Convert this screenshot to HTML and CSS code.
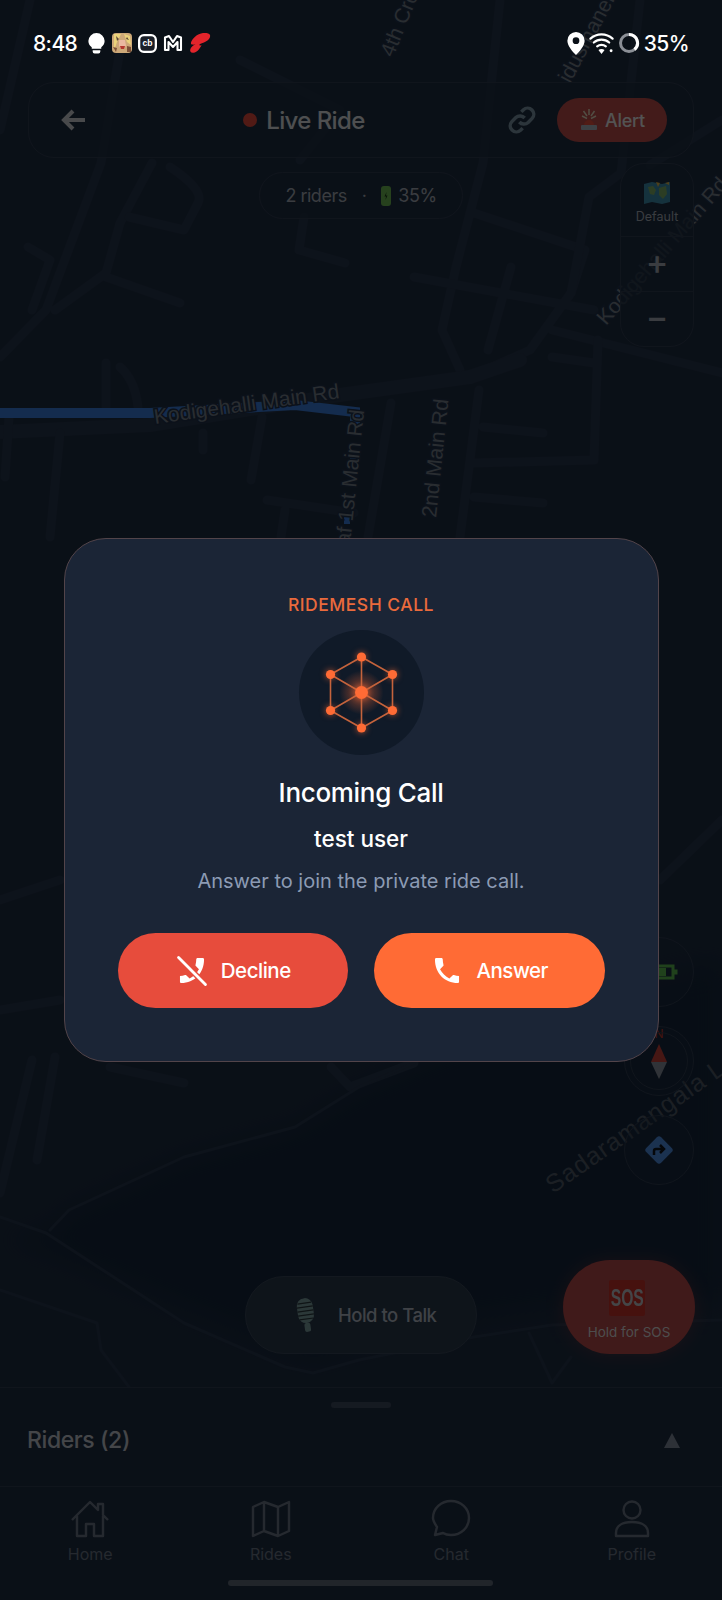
FILE: index.html
```html
<!DOCTYPE html>
<html lang="en">
<head>
    <meta charset="UTF-8">
    <meta name="viewport" content="width=device-width, initial-scale=1.0">
    <title>Live Ride</title>
    <link rel="stylesheet" href="styles.css">
</head>
<body>
    <div class="phone">
        <div class="map-area">
            <svg class="map" viewBox="0 0 722 1387" width="722" height="1387">
                <path class="lake" d="M0 1240 L50 1230 L69 1210 L184 1157 L295 1127 L359 1087 L414 1063 L560 1000 L722 960 V1300 L552 1310 L474 1320 L359 1345 L313 1360 L285 1350 L184 1310 L46 1250 Z"/>
                <g class="roads">
                    <path d="M30 0 L0 130 M120 50 L101 163 L46 310 L0 357 M152 163 L120 223 L106 273 L55 310 M106 277 L180 303"/>
                    <path d="M28 247 L50 260 L32 310 M170 167 Q205 190 198 203 L184 230 L129 217 M304 217 L299 250 L345 263"/>
                    <path d="M240 60 L340 110 L300 160 M500 0 L483 163 L456 267 L442 330 L460 370 M474 213 L585 250 L571 293"/>
                    <path d="M640 0 L621 173 L589 197 L571 293 L530 350 L470 377 M414 277 L594 310 M511 267 L488 350 M552 330 L722 373 M722 120 L650 165"/>
                    <path class="wide" d="M0 432 L150 425 L340 395 L470 377 L520 360"/>
                    <path d="M391 403 L368 537 M479 390 L460 537 M598 340 L594 460 L474 463 M552 357 L594 363 M483 427 L543 433 M474 497 L543 503"/>
                    <path d="M60 433 L50 537 M9 417 L5 477 M106 363 V407 M120 367 Q135 380 138 407 M203 433 V450 M262 417 L251 480 M267 500 L354 513 M285 510 L281 537"/>
                    <path d="M0 900 L60 880 M0 1010 L60 1000 M722 820 L660 880 M55 1057 L37 1160 M32 1060 L0 1193 M110 1067 L184 1083 M331 1067 L350 1087 L414 1063"/>
                    <path class="thin" d="M50 1230 L69 1210 L184 1157 L295 1127 L359 1087 L414 1063"/>
                    <path class="thin" d="M0 1217 L46 1233 L184 1323 L285 1367 L313 1373 L359 1360 L474 1337 L552 1325 L722 1320"/>
                    <path class="thin" d="M0 1290 L97 1323 L101 1350 L129 1387 M529 1333 L552 1383 L571 1357"/>
                </g>
                <path class="route" d="M0 413 H150 L295 405 L355 412 V424"/>
                <path class="route small" d="M353 457 V462 M347 516 V524"/>
                <text class="road-label" transform="translate(155 424) rotate(-8)">Kodigehalli Main Rd</text>
                <text class="road-label" transform="translate(350 545) rotate(-84)">af 1st Main Rd</text>
                <text class="road-label" transform="translate(436 518) rotate(-84)">2nd Main Rd</text>
                <text class="road-label" transform="translate(393 58) rotate(-68)">4th Cross</text>
                <text class="road-label" transform="translate(570 84) rotate(-62)">idusmaneha</text>
                <text class="road-label" transform="translate(606 326) rotate(-49)">Kodigehalli Main Rd</text>
                <text class="road-label big" transform="translate(553 1194) rotate(-35)">Sadaramangala Lake</text>
            </svg>

            <div class="top-overlay">
                <div class="topbar">
                    <svg class="back" viewBox="0 0 26 22" width="26" height="22"><path d="M24 11H4M12 2 3 11l9 9"/></svg>
                    <div class="title"><span class="live-dot"></span>Live Ride</div>
                    <svg class="link-icon" viewBox="0 0 24 24" width="32" height="32"><path d="M10 13.5a4.6 4.6 0 0 0 6.6.3l3-3a4.6 4.6 0 0 0-6.5-6.5l-1.6 1.6M14 10.5a4.6 4.6 0 0 0-6.6-.3l-3 3a4.6 4.6 0 0 0 6.5 6.5l1.6-1.6"/></svg>
                    <div class="alert-btn">
                        <svg viewBox="0 0 20 22" width="20" height="22"><path class="siren-ray" d="M10 0v6M4.5 2 8 7M15.5 2 12 7M3 7l5 2.5M17 7l-5 2.5"/><path class="siren-dome" d="M5 16a5 5 0 0 1 10 0z"/><rect class="siren-base" x="2" y="16" width="16" height="5" rx="1"/></svg>
                        Alert
                    </div>
                </div>
                <div class="chip">
                    <span>2 riders</span>
                    <span class="chip-sep">·</span>
                    <svg viewBox="0 0 10 20" width="10" height="20"><rect width="10" height="20" rx="3" fill="#6dbb55"/><path d="M5.5 6 3.5 10.5H5L4.5 14l2-4.5H5z" fill="#1d3a18"/></svg>
                    <span>35%</span>
                </div>
            </div>

            <div class="map-controls">
                <div class="style-btn">
                    <svg viewBox="0 0 28 24" width="28" height="24">
                        <path d="M1 3 9 1l10 2 8-2v20l-8 2-10-2-8 2z" fill="#3e8fb0"/>
                        <path d="M5 6l5-1 3 4-2 5-4-1zM16 7l7-2 1 8-4 5-4-4z" fill="#7fb069"/>
                        <path d="M13 1l4 1-2 4zM22 2l4-1v3z" fill="#e0b84a"/>
                    </svg>
                    <span>Default</span>
                </div>
                <div class="zoom-btn">+</div>
                <div class="zoom-btn">−</div>
            </div>

            <div class="side-buttons">
                <div class="round-btn">
                    <svg class="battery" viewBox="0 0 24 16" width="24" height="16"><path d="M2 2h17v12H2zM22 5.5v5"/><rect class="battery-fill" x="4" y="4" width="8" height="8"/></svg>
                </div>
                <div class="round-btn compass">
                    <span class="compass-n">N</span>
                    <svg viewBox="0 0 16 35" width="16" height="35"><path d="M8 0 16 18H0z" fill="#c9433a"/><path d="M8 35 16 18H0z" fill="#8b93a0"/></svg>
                </div>
                <div class="round-btn">
                    <svg viewBox="0 0 32 32" width="32" height="32"><rect x="5.5" y="5.5" width="21" height="21" rx="3" transform="rotate(45 16 16)" fill="#4f8fe6"/><path d="M11 21v-4a2 2 0 0 1 2-2h7M17 11l4 4-4 4" fill="none" stroke="#10151d" stroke-width="2.5"/></svg>
                </div>
            </div>

            <div class="ptt-btn">
                <svg class="mic" viewBox="0 0 22 34" width="22" height="34">
                    <rect class="mic-head" x="3" y="0" width="16" height="25" rx="8"/>
                    <path class="mic-lines" d="M4 5h14M3 9h16M3 13h16M3 17h16M4 21h14"/>
                    <rect class="mic-stem" x="8" y="25" width="6" height="9" rx="2"/>
                </svg>
                <span>Hold to Talk</span>
            </div>
            <div class="sos-btn">
                <span class="sos-mark"><span class="sos-text">SOS</span></span>
                <span class="sos-label">Hold for SOS</span>
            </div>
        </div>

        <div class="sheet">
            <div class="handle"></div>
            <div class="sheet-row">
                <span>Riders (2)</span>
                <span class="sheet-arrow"></span>
            </div>
        </div>

        <nav class="tabs">
            <div class="tab">
                <svg viewBox="0 0 40 40" width="40" height="40"><path d="M2 21 20 3l8 8V5h5v11l5 5M7 17v20h9V25h8v12h9V17"/></svg>
                <span>Home</span>
            </div>
            <div class="tab">
                <svg viewBox="0 0 40 40" width="40" height="40"><path d="M2 8 13 3l14 5 11-5v29l-11 5-14-5-11 5zM13 3v29M27 8v29"/></svg>
                <span>Rides</span>
            </div>
            <div class="tab">
                <svg viewBox="0 0 40 40" width="40" height="40"><path d="M20 2c10 0 18 7.5 18 17s-8 17-18 17c-3 0-6-.7-8-2l-8 2 2-8c-2-3-4-6-4-9C2 9.5 10 2 20 2z"/></svg>
                <span>Chat</span>
            </div>
            <div class="tab">
                <svg viewBox="0 0 40 40" width="40" height="40"><circle cx="20" cy="11" r="8.5"/><path d="M4 37v-3c0-7 6-11 16-11s16 4 16 11v3z"/></svg>
                <span>Profile</span>
            </div>
            <div class="home-bar"></div>
        </nav>

        <div class="scrim">
            <div class="call-modal">
                <div class="call-tag">RIDEMESH CALL</div>
                <div class="call-logo">
                    <svg viewBox="0 0 125 125" width="125" height="125">
                        <defs>
                            <radialGradient id="glow">
                                <stop offset="0" stop-color="#ff6b35" stop-opacity=".55"/>
                                <stop offset="1" stop-color="#ff6b35" stop-opacity="0"/>
                            </radialGradient>
                        </defs>
                        <circle cx="62.5" cy="62.5" r="22" fill="url(#glow)"/>
                        <g class="mesh-lines">
                            <path d="M62.5 27 93.5 44.5V80.5L62.5 98 31.5 80.5V44.5Z"/>
                            <path d="M62.5 27V98M31.5 44.5 93.5 80.5M93.5 44.5 31.5 80.5"/>
                        </g>
                        <g class="mesh-nodes">
                            <circle cx="62.5" cy="27" r="4.6"/>
                            <circle cx="93.5" cy="44.5" r="4.6"/>
                            <circle cx="93.5" cy="80.5" r="4.6"/>
                            <circle cx="62.5" cy="98" r="4.6"/>
                            <circle cx="31.5" cy="80.5" r="4.6"/>
                            <circle cx="31.5" cy="44.5" r="4.6"/>
                            <circle cx="62.5" cy="62.5" r="6.5"/>
                        </g>
                    </svg>
                </div>
                <h2 class="call-title">Incoming Call</h2>
                <div class="call-user">test user</div>
                <p class="call-desc">Answer to join the private ride call.</p>
                <div class="call-actions">
                    <button class="call-btn decline">
                        <svg viewBox="0 0 24 24" width="34" height="34"><path fill="#fff" d="M20.5 15.5c-1.2 0-2.5-.2-3.6-.6-.3-.1-.7 0-1 .2l-2.2 2.2c-2.8-1.5-5.2-3.8-6.6-6.6l2.2-2.2c.3-.3.4-.7.2-1-.3-1.1-.5-2.4-.5-3.6 0-.6-.4-1-1-1H4.5c-.6 0-1 .4-1 1C3.5 13.6 10.4 20.5 19.5 20.5c.6 0 1-.4 1-1z" transform="matrix(-1 0 0 1 24 0)"/><path stroke="#e74c3c" stroke-width="4" d="M2.5 2.5 21.5 21.5"/><path stroke="#fff" stroke-width="2" stroke-linecap="round" d="M2.5 2.5 21.5 21.5"/></svg>
                        Decline
                    </button>
                    <button class="call-btn answer">
                        <svg viewBox="0 0 24 24" width="34" height="34"><path fill="#fff" d="M20.5 15.5c-1.2 0-2.5-.2-3.6-.6-.3-.1-.7 0-1 .2l-2.2 2.2c-2.8-1.5-5.2-3.8-6.6-6.6l2.2-2.2c.3-.3.4-.7.2-1-.3-1.1-.5-2.4-.5-3.6 0-.6-.4-1-1-1H4.5c-.6 0-1 .4-1 1C3.5 13.6 10.4 20.5 19.5 20.5c.6 0 1-.4 1-1z"/></svg>
                        Answer
                    </button>
                </div>
            </div>
        </div>

        <div class="statusbar">
            <div class="status-left">
                <span class="clock">8:48</span>
                <svg viewBox="0 0 18 22" width="19" height="21"><path fill="#fff" d="M9 0a8.5 8.5 0 0 1 8.5 8.5c0 3-1.7 5-3.5 6.5v1.5H4V15C2 13.5.5 11.5.5 8.5A8.5 8.5 0 0 1 9 0zM5 18h8v1.5a2 2 0 0 1-2 2H7a2 2 0 0 1-2-2z"/></svg>
                <svg viewBox="0 0 20 20" width="20" height="20">
                    <rect width="20" height="20" rx="4" fill="#cda878"/>
                    <path d="M2 1h7L5 9l-3 9zM12 1l6 2 1 9-4-3z" fill="#ead27a"/>
                    <path d="M7 7h6l1 6-4 3-3-3z" fill="#eab9a0"/>
                    <path d="M8 13h5l-1 3H9z" fill="#b5392f"/>
                    <path d="M1 14l4 1-1 4zM15 13l4 1v5h-4z" fill="#7c4f36"/>
                    <path d="M4 3l3 3-2 2zM15 4l2 3-3-1z" fill="#5b4636"/>
                </svg>
                <svg viewBox="0 0 20 20" width="19" height="19"><rect x="1.2" y="1.2" width="17.6" height="17.6" rx="5" fill="#1a1f28" stroke="#fff" stroke-width="2.4"/><text class="cb-mark" x="10" y="13">cb</text></svg>
                <svg viewBox="0 0 20 18" width="20" height="18"><path d="M2 16V3.5L6 2l4 6 4-6 4 1.5V16h-3.5V8L10 13 5.5 8v8z" fill="none" stroke="#fff" stroke-width="2.1" stroke-linejoin="round"/></svg>
                <svg viewBox="0 0 22 22" width="22" height="22"><path fill="#e3242b" d="M21 3c.8 3-2 6-6 7.5-2 .8-4 1-4.5 2-.4.8.6 1.2 2 .8-1.5 3-4 7-8 7.5-3 .4-4-2-3-4 1-2.5 3-3.5 5-4.5-2 .5-4 .5-4.500-.5C1.500 9 6 3 12 1.500c4-1 8-.5 9 1.500z"/></svg>
            </div>
            <div class="status-right">
                <svg viewBox="0 0 18 24" width="18" height="23"><path fill="#fff" fill-rule="evenodd" d="M9 0a9 9 0 0 1 9 9c0 5-5 11-9 15-4-4-9-10-9-15a9 9 0 0 1 9-9zm0 5.5a3.5 3.5 0 1 0 0 7 3.5 3.5 0 0 0 0-7z"/></svg>
                <svg viewBox="0 0 26 24" width="25" height="24"><g fill="none" stroke="#fff" stroke-width="2.3" stroke-linecap="round"><path d="M1.5 7.5c6.5-6 16.5-6 23 0"/><path d="M5 11.5c4.5-4 11.5-4 16 0"/><path d="M8.5 15.5c2.5-2 6.5-2 9 0"/></g><path fill="#fff" d="M13 23.5 9.8 19.3c2-1.400 4.400-1.400 6.400 0z"/><circle cx="23" cy="20" r="1.500" fill="#fff"/></svg>
                <svg viewBox="0 0 22 22" width="22" height="22"><circle cx="11" cy="11" r="8.5" fill="none" stroke="#8b8f96" stroke-width="3"/><path d="M11 2.5a8.5 8.5 0 0 1 5.5 15" fill="none" stroke="#fff" stroke-width="3"/></svg>
                <span class="clock">35%</span>
            </div>
        </div>
    </div>
</body>
</html>
```

FILE: styles.css
```css
* {
    box-sizing: border-box;
}
body {
    margin: 0;
    font-family: Inter, "Noto Sans", sans-serif;
    background-color: #0a0f18;
}
.phone {
    width: 722px;
    height: 1600px;
    position: relative;
    display: flex;
    flex-direction: column;
    overflow: hidden;
    background-color: #1f2f44;
    color: #fff;
}

/* map */
.map-area {
    height: 1387px;
    position: relative;
    padding-top: 82px;
    background-color: #1f2f44;
}
.map {
    position: absolute;
    top: 0;
    left: 0;
}
.lake {
    fill: #15273d;
    filter: blur(14px);
}
.roads path {
    fill: none;
    stroke: #27374d;
    stroke-width: 9;
    stroke-linecap: round;
    stroke-linejoin: round;
}
.roads path.wide {
    stroke-width: 14;
}
.roads path.thin {
    stroke-width: 3;
}
.route {
    fill: none;
    stroke: #3a7fe0;
    stroke-width: 10;
}
.route.small {
    stroke-width: 6;
}
.road-label {
    font-family: "Liberation Sans", sans-serif;
    font-size: 21px;
    fill: #76808c;
    stroke: #22324a;
    stroke-width: 3px;
    paint-order: stroke;
}
.road-label.big {
    font-size: 25px;
    letter-spacing: 1px;
    fill: #4f5a68;
    stroke: none;
}

/* top controls */
.top-overlay {
    position: relative;
    display: flex;
    flex-direction: column;
    align-items: center;
}
.topbar {
    width: 666px;
    height: 76px;
    display: flex;
    align-items: center;
    padding: 0 26px 0 32px;
    background-color: rgba(31, 47, 68, .8);
    border: 1px solid #2f3d52;
    border-radius: 26px;
}
.back {
    fill: none;
    stroke: #cdd1d6;
    stroke-width: 4;
}
.title {
    flex: 1;
    display: flex;
    justify-content: center;
    align-items: center;
    gap: 9px;
    padding-left: 15px;
    font-size: 24px;
    font-weight: 500;
    letter-spacing: -.6px;
    color: #dfe2e6;
}
.live-dot {
    width: 14px;
    height: 14px;
    border-radius: 50%;
    background-color: #e74c3c;
}
.link-icon {
    margin-right: 19px;
    fill: none;
    stroke: #7f98a8;
    stroke-width: 2.6;
}
.alert-btn {
    width: 110px;
    height: 44px;
    display: flex;
    align-items: center;
    justify-content: center;
    gap: 6px;
    background-color: #bf4d4b;
    border-radius: 22px;
    font-size: 18px;
    font-weight: 500;
    letter-spacing: -.3px;
    color: #eee;
}
.siren-ray {
    stroke: #e9dcc0;
    stroke-width: 1.5;
    fill: none;
}
.siren-dome {
    fill: #e9503f;
}
.siren-base {
    fill: #aeb7c2;
}
.chip {
    height: 47px;
    margin-top: 14px;
    padding: 0 25px;
    display: flex;
    align-items: center;
    gap: 10px;
    background-color: rgba(31, 47, 68, .8);
    border: 1px solid #2f3d52;
    border-radius: 24px;
    font-size: 18px;
    letter-spacing: -.5px;
    color: #a6adb8;
}
.chip-sep {
    margin: 0 5px;
}
.chip svg {
    margin-right: -3px;
}

.map-controls {
    position: absolute;
    top: 163px;
    right: 28px;
    width: 74px;
    background-color: rgba(31, 47, 68, .8);
    border: 1px solid #2f3d52;
    border-radius: 24px;
}
.style-btn {
    height: 72px;
    display: flex;
    flex-direction: column;
    align-items: center;
    justify-content: center;
    gap: 4px;
    padding-top: 5px;
    font-size: 12.5px;
    color: #a6adb8;
}
.zoom-btn {
    height: 55px;
    padding-bottom: 6px;
    display: flex;
    align-items: center;
    justify-content: center;
    border-top: 1px solid #2f3d52;
    font-size: 34px;
    font-weight: 500;
    color: #a6adb8;
}

.side-buttons {
    position: absolute;
    top: 937px;
    right: 28px;
    display: flex;
    flex-direction: column;
    gap: 19px;
}
.round-btn {
    width: 70px;
    height: 70px;
    position: relative;
    display: flex;
    align-items: center;
    justify-content: center;
    background-color: rgba(31, 47, 68, .35);
    border: 1px solid #2f3d52;
    border-radius: 50%;
}
.battery {
    margin-left: 14px;
    fill: none;
    stroke: #5dbb50;
    stroke-width: 3;
}
.battery-fill {
    fill: #5dbb50;
    stroke: none;
}
.compass::after {
    content: "";
    position: absolute;
    inset: 5px;
    border: 1px solid #2f3d52;
    border-radius: 50%;
}
.compass-n {
    position: absolute;
    top: -1px;
    left: 0;
    right: 0;
    text-align: center;
    font-size: 12px;
    color: #c0392b;
}

.ptt-btn {
    position: absolute;
    top: 1276px;
    left: 245px;
    width: 232px;
    height: 78px;
    padding-left: 49px;
    display: flex;
    align-items: center;
    gap: 21px;
    background-color: #2a3a4c;
    border: 1px solid #384759;
    border-radius: 39px;
    font-size: 18.5px;
    font-weight: 500;
    letter-spacing: -.5px;
    color: #b4bcc8;
}
.mic {
    transform: rotate(-8deg);
}
.mic-head, .mic-stem {
    fill: #7da0a2;
}
.mic-lines {
    stroke: #2b3a3e;
    stroke-width: 1.2;
}
.sos-btn {
    position: absolute;
    top: 1260px;
    left: 563px;
    width: 132px;
    height: 94px;
    padding-top: 20px;
    display: flex;
    flex-direction: column;
    align-items: center;
    background-color: #b84a4a;
    border-radius: 47px;
    box-shadow: 0 0 18px rgba(231, 76, 60, .22);
}
.sos-mark {
    width: 36px;
    height: 36px;
    margin-left: -4px;
    display: flex;
    align-items: center;
    justify-content: center;
    background-color: #c9332a;
    border-radius: 2px;
}
.sos-text {
    display: inline-block;
    transform: scaleX(.68);
    font-family: "Liberation Sans", sans-serif;
    font-size: 23px;
    font-weight: 700;
    color: #c3c6ca;
}
.sos-label {
    margin-top: 8px;
    font-size: 13.5px;
    color: #ddd;
}

/* bottom sheet */
.sheet {
    height: 99px;
    padding: 14px 28px 0 27px;
    background-color: #1f2f44;
    border-top: 1px solid #2f3d52;
}
.handle {
    width: 60px;
    height: 6px;
    margin: 0 auto;
    background-color: #3c4a5e;
    border-radius: 3px;
}
.sheet-row {
    margin-top: 18px;
    display: flex;
    justify-content: space-between;
    align-items: center;
    font-size: 23px;
    font-weight: 500;
    letter-spacing: -.4px;
    color: #c4c9d0;
}
.sheet-arrow {
    width: 0;
    height: 0;
    margin-right: 14px;
    border-left: 8px solid transparent;
    border-right: 8px solid transparent;
    border-bottom: 15px solid #808c9e;
}

.tabs {
    height: 114px;
    position: relative;
    display: grid;
    grid-template-columns: repeat(4, 1fr);
    padding-top: 12px;
    background-color: #1f2f44;
    border-top: 1px solid #2f3d52;
}
.tab {
    display: flex;
    flex-direction: column;
    align-items: center;
    gap: 5px;
    font-size: 16px;
    color: #6b7686;
}
.tab svg {
    fill: none;
    stroke: #6b7686;
    stroke-width: 2.4;
    stroke-linejoin: round;
}
.home-bar {
    position: absolute;
    left: 228px;
    bottom: 14px;
    width: 265px;
    height: 6px;
    background-color: #5f6a7a;
    border-radius: 3px;
}

/* call dialog */
.scrim {
    position: absolute;
    top: 0;
    left: 0;
    width: 100%;
    height: 100%;
    display: flex;
    align-items: center;
    justify-content: center;
    background-color: rgba(0, 0, 0, .65);
}
.call-modal {
    width: 595px;
    display: flex;
    flex-direction: column;
    align-items: center;
    padding: 55px 53px 53px;
    background-color: #1b2536;
    border: 1.5px solid #52444a;
    border-radius: 42px;
}
.call-tag {
    line-height: 22px;
    font-size: 17.5px;
    font-weight: 500;
    letter-spacing: .5px;
    color: #ea6a3c;
}
.call-logo {
    width: 125px;
    height: 125px;
    margin-top: 14px;
    background-color: #101a28;
    border-radius: 50%;
}
.mesh-lines path {
    fill: none;
    stroke: #c4633c;
    stroke-width: 1.6;
}
.mesh-nodes circle {
    fill: #ff6b35;
    filter: drop-shadow(0 0 3px rgba(255, 107, 53, .7));
}
.call-title {
    margin: 22px 0 0;
    line-height: 32px;
    font-size: 26px;
    font-weight: 500;
    letter-spacing: -.3px;
    color: #fff;
}
.call-user {
    margin-top: 16px;
    line-height: 28px;
    font-size: 22.5px;
    font-weight: 500;
    color: #fff;
}
.call-desc {
    margin: 15px 0 0;
    line-height: 26px;
    font-size: 20px;
    color: #8c9bb4;
}
.call-actions {
    width: 100%;
    margin-top: 39px;
    display: flex;
    gap: 26px;
}
.call-btn {
    flex: 1;
    height: 75px;
    display: flex;
    align-items: center;
    justify-content: center;
    gap: 12px;
    border: none;
    border-radius: 38px;
    font-family: inherit;
    font-size: 20.5px;
    font-weight: 500;
    letter-spacing: -.5px;
    color: #fff;
}
.decline {
    background-color: #e74c3c;
}
.answer {
    background-color: #ff6b35;
}

/* status bar */
.statusbar {
    position: absolute;
    top: 30px;
    left: 33px;
    right: 33px;
    height: 26px;
    display: flex;
    justify-content: space-between;
    align-items: center;
}
.status-left {
    display: flex;
    align-items: center;
    gap: 6px;
}
.status-right {
    display: flex;
    align-items: center;
    gap: 4px;
}
.status-left .clock {
    margin-right: 4px;
}
.clock {
    font-size: 21px;
    font-weight: 500;
    letter-spacing: -.6px;
}
.cb-mark {
    font-family: "Liberation Sans", sans-serif;
    font-size: 9px;
    font-weight: 700;
    text-anchor: middle;
    fill: #fff;
}
```
